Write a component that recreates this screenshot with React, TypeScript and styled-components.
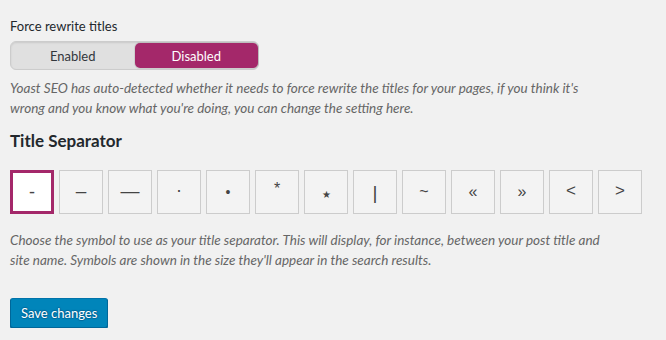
import React, { useState } from "react";
import styled, { createGlobalStyle } from "styled-components";

const Global = createGlobalStyle`
  html, body { margin: 0; padding: 0; background: #f1f1f1; }
  body { font-family: Lato, "Open Sans", sans-serif; color: #444; font-size: 13px; }
`;

const Page = styled.div`
  padding: 16px 10px 0 10px;
`;

const Label = styled.div`
  font-size: 13px;
  line-height: 20px;
  color: #23282d;
`;

const Switch = styled.div`
  margin-top: 5px;
  display: flex;
  width: 247px;
  height: 27px;
  border: 1px solid #ccc;
  border-radius: 6px;
  background: #e0e0e0;
  box-shadow: inset 0 1px 2px rgba(0, 0, 0, 0.1);
`;

const SwitchOption = styled.button<{ $active: boolean }>`
  flex: 1;
  border: none;
  margin: ${(p) => (p.$active ? "1px 0" : "0")};
  border-radius: 5px;
  font-family: inherit;
  font-size: 13px;
  cursor: pointer;
  color: ${(p) => (p.$active ? "#fff" : "#32373c")};
  background: ${(p) => (p.$active ? "#a4286a" : "transparent")};
  box-shadow: ${(p) => (p.$active ? "0 0 0 1px rgba(0,0,0,0.08)" : "none")};
  padding: 0;
`;

const Description = styled.p<{ $mt: number }>`
  margin: ${(p) => p.$mt}px 0 0 0;
  font-style: italic;
  font-size: 13.5px;
  line-height: 20px;
  color: #666;
  white-space: nowrap;
`;

const Heading = styled.h2`
  margin: 12px 0 0 0;
  font-size: 17px;
  line-height: 22px;
  font-weight: 700;
  color: #23282d;
`;

const SepRow = styled.div`
  margin-top: 18px;
  display: flex;
  gap: 5px;
`;

const SepButton = styled.button<{ $active: boolean }>`
  box-sizing: border-box;
  flex: 0 0 44px;
  width: 44px;
  height: 44px;
  padding: 0;
  display: flex;
  align-items: center;
  justify-content: center;
  font-family: "Liberation Sans", Arial, sans-serif;
  font-size: 18px;
  color: #444;
  cursor: pointer;
  border: ${(p) => (p.$active ? "3px solid #a4286a" : "1px solid #ccc")};
  background: ${(p) => (p.$active ? "#fff" : "#f3f3f3")};
`;

const Glyph = styled.span<{ $size: number; $shift: number }>`
  font-size: ${(p) => p.$size}px;
  position: relative;
  top: ${(p) => p.$shift}px;
  line-height: 1;
`;

const SaveButton = styled.button`
  margin-top: 28px;
  box-sizing: border-box;
  height: 30px;
  padding: 0 10px 1px;
  font-family: inherit;
  font-size: 13px;
  color: #fff;
  background: #0085ba;
  border: 1px solid;
  border-color: #0073aa #006799 #006799;
  border-radius: 3px;
  box-shadow: 0 1px 0 #006799;
  text-shadow: 0 -1px 1px #006799, 1px 0 1px #006799, 0 1px 1px #006799, -1px 0 1px #006799;
  cursor: pointer;
`;

const separators: { ch: string; size: number; shift: number }[] = [
  { ch: "-", size: 18, shift: 0 },
  { ch: "–", size: 19, shift: -2 },
  { ch: "—", size: 19, shift: -2 },
  { ch: "·", size: 18, shift: -2 },
  { ch: "•", size: 14, shift: 0 },
  { ch: "*", size: 16, shift: -3 },
  { ch: "★", size: 10, shift: 3 },
  { ch: "|", size: 19, shift: 0 },
  { ch: "~", size: 16, shift: 0 },
  { ch: "«", size: 16, shift: 0 },
  { ch: "»", size: 16, shift: 0 },
  { ch: "<", size: 17, shift: -2 },
  { ch: ">", size: 17, shift: -2 },
];

export default function App() {
  const [forced, setForced] = useState(false);
  const [sep, setSep] = useState(0);
  return (
    <Page>
      <Global />
      <Label>Force rewrite titles</Label>
      <Switch>
        <SwitchOption $active={forced} onClick={() => setForced(true)}>Enabled</SwitchOption>
        <SwitchOption $active={!forced} onClick={() => setForced(false)}>Disabled</SwitchOption>
      </Switch>
      <Description $mt={8}>
        Yoast SEO has auto-detected whether it needs to force rewrite the titles for your pages, if you think it's
        <br />
        wrong and you know what you're doing, you can change the setting here.
      </Description>
      <Heading>Title Separator</Heading>
      <SepRow>
        {separators.map((s, i) => (
          <SepButton key={i} $active={sep === i} onClick={() => setSep(i)}>
            <Glyph $size={s.size} $shift={s.shift}>{s.ch}</Glyph>
          </SepButton>
        ))}
      </SepRow>
      <Description $mt={16}>
        Choose the symbol to use as your title separator. This will display, for instance, between your post title and
        <br />
        site name. Symbols are shown in the size they'll appear in the search results.
      </Description>
      <SaveButton>Save changes</SaveButton>
    </Page>
  );
}
